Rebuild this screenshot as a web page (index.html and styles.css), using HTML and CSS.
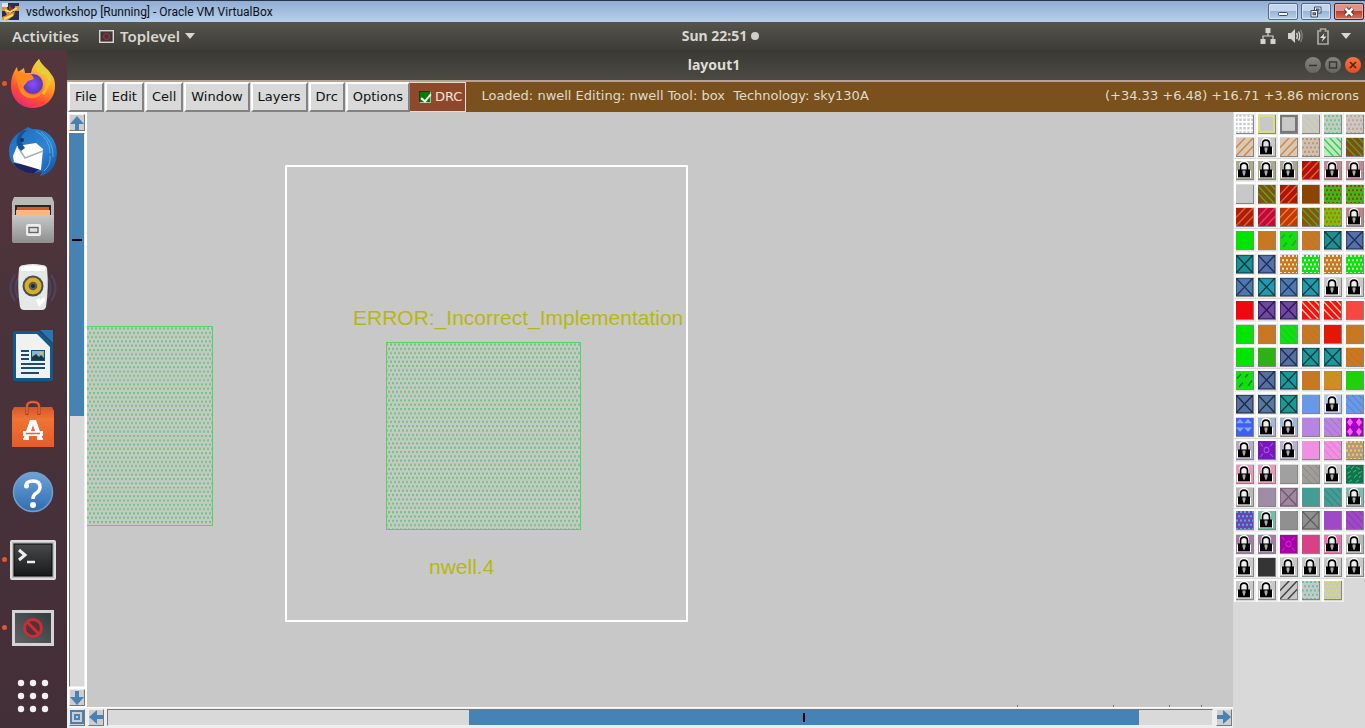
FILE: index.html
```html
<!DOCTYPE html>
<html lang="en">
<head>
<meta charset="utf-8">
<title>vsdworkshop [Running] - Oracle VM VirtualBox</title>
<link rel="stylesheet" href="styles.css">
</head>
<body>
<header class="host-bar">
  <svg class="host-icon" width="17" height="17" viewBox="0 0 17 17"><rect width="17" height="17" fill="#26304e"/><path d="M0 4H5L6 10L12 9L13 3H17V8H13L12 12L6 17H0V14L5 12L3 8H0z" fill="#e8902c"/><path d="M3 7L8 9L15 5M2 16L11 12" stroke="#fbe06a" stroke-width="2" fill="none"/><path d="M7 2L11 6L7 8z" fill="#b8352b"/><rect width="6" height="4" fill="#dfe3ea"/></svg>
  <h1 class="host-title">vsdworkshop [Running] - Oracle VM VirtualBox</h1>
  <div class="host-controls">
    <button class="host-btn" aria-label="Minimize"><svg width="12" height="12" viewBox="0 0 12 12"><rect x="1.500" y="6.500" width="9" height="3" rx="1" fill="#fff" stroke="#3d4c66"/></svg></button>
    <button class="host-btn" aria-label="Restore"><svg width="12" height="12" viewBox="0 0 12 12" stroke="#3d4c66"><path d="M4.500 1H11V7H4.500z" fill="#fff"/><rect x="6.500" y="3" width="2.500" height="2" fill="#8fabcf"/><path d="M1 4.500H7.500V11H1z" fill="#fff"/><rect x="3" y="6.800" width="2.500" height="2" fill="#8fabcf"/></svg></button>
    <button class="host-btn host-close" aria-label="Close"><svg width="12" height="12" viewBox="0 0 12 12"><path d="M2.500 2.500L9.500 9.500M9.500 2.500L2.500 9.500" stroke="#5b2626" stroke-width="4.400"/><path d="M2.500 2.500L9.500 9.500M9.500 2.500L2.500 9.500" stroke="#fff" stroke-width="2.500"/></svg></button>
  </div>
</header>

<div class="shell">
  <div class="top-bar">
    <div class="top-left">
      <button class="top-item">Activities</button>
      <button class="top-item top-app"><svg width="15" height="13" viewBox="0 0 15 13"><rect x=".7" y=".7" width="13.600" height="11.600" fill="#45333a" stroke="#d8d8d4" stroke-width="1.400"/><circle cx="7.500" cy="6.500" r="3" fill="#5c2a35" stroke="#94404c"/></svg>Toplevel<svg width="10" height="6" viewBox="0 0 10 6"><path d="M0 0H10L5 6z" fill="#d8d8d0"/></svg></button>
    </div>
    <button class="top-item top-clock">Sun 22:51<span class="dot"></span></button>
    <div class="top-right">
      <svg width="16" height="16" viewBox="0 0 16 16" fill="#d4d4cc"><path d="M5.500 0H10.500V5H5.500zM.5 11H5.500V16H.5zM10.500 11H15.500V16H10.500z"/><path d="M8 5V8M3 11V8H13V11" fill="none" stroke="#d4d4cc" stroke-width="1.200"/></svg>
      <svg width="16" height="16" viewBox="0 0 16 16"><path d="M1 5H4L8 1V15L4 11H1z" fill="#d4d4cc"/><path d="M9.500 5Q11.500 8 9.500 11M11.500 3.500Q14 8 11.500 12.500" fill="none" stroke="#d4d4cc" stroke-width="1.400"/><path d="M13.500 2Q17 8 13.500 14" fill="none" stroke="#86867f" stroke-width="1.200"/></svg>
      <svg class="battery" width="14" height="17" viewBox="0 0 14 17"><path d="M4.500 1H9.500V3H12V16H2V3H4.500z" fill="none" stroke="#a9a9a2" stroke-width="1.700"/><path d="M8.500 5L4 10H7L5.500 14L10.500 8.500H7.500z" fill="#e4e4de"/></svg>
      <svg width="10" height="6" viewBox="0 0 10 6"><path d="M0 0H10L5 6z" fill="#d8d8d0"/></svg>
    </div>
  </div>

  <nav class="dock" aria-label="Dock">
    <button class="launcher running" aria-label="Firefox"><svg width="50" height="52" viewBox="0 0 50 52">
      <defs><linearGradient id="ff" x1=".8" y1="0" x2=".3" y2="1"><stop offset="0" stop-color="#ffe24a"/><stop offset=".45" stop-color="#ff9a25"/><stop offset=".75" stop-color="#ff4a36"/><stop offset="1" stop-color="#e82a75"/></linearGradient><radialGradient id="fp"><stop offset="0" stop-color="#8a4dfb"/><stop offset="1" stop-color="#553ab8"/></radialGradient></defs>
      <path d="M31 1C33 8 40 10 43 16C46 19 47 23 47 28C47 41 37 50 25 50C12 50 3 40 3 28C3 19 6 13 9 9L10 14L16 10L17 15H23C24 9 27 5 31 1z" fill="url(#ff)"/><path d="M31 1C34 9 43 11 43 22L41 28L36 17L29 13C28 8 30 4 31 1z" fill="#e3cf3c"/><circle cx="25" cy="26" r="10" fill="url(#fp)"/><path d="M9 13L16 15L24 17L26 21L20 23L15 29C17 38 29 39 35 33C32 42 17 43 12 33C8 23 8 17 9 13z" fill="#ff8a24"/><path d="M36 17Q43 26 35 36" stroke="#ffb52c" stroke-width="3" fill="none"/></svg></button>
    <button class="launcher" aria-label="Thunderbird"><svg width="50" height="50" viewBox="0 0 50 50"><defs><linearGradient id="tb" x1="0" y1="0" x2="1" y2="1"><stop offset="0" stop-color="#1e6ab8"/><stop offset=".6" stop-color="#2d86d4"/><stop offset="1" stop-color="#164a96"/></linearGradient></defs><path d="M14 4L20 0L24 2C40 1 49 13 49 26C49 39 41 48 32 49L34 44L24 47C10 44 1 37 1 24C1 15 6 8 14 4z" fill="url(#tb)"/><path d="M5 36Q10 45 25 47L34 40z" fill="#20235e"/><path d="M9 19L28 16L35 22L33 43L6 35L5 29z" fill="#fff"/><path d="M10 20L17 31L35 24" stroke="#a9b1b8" stroke-width="1.500" fill="none"/><path d="M20 3C11 8 12 15 17 21L13 24C6 17 8 9 14 4z" fill="#155294"/><circle cx="14" cy="13" r="2" fill="#12355f"/><path d="M28 4Q42 12 42 26M33 5Q46 15 45 30M42 29Q43 38 36 44" stroke="#59a9e6" fill="none"/></svg></button>
    <button class="launcher" aria-label="Files"><svg width="44" height="48" viewBox="0 0 44 48"><defs><linearGradient id="fi" x1="0" y1="0" x2="0" y2="1"><stop offset="0" stop-color="#c8c8c8"/><stop offset="1" stop-color="#8e8e8e"/></linearGradient></defs><path d="M3 1H41L43 6V45L41 47H3L1 45V6z" fill="#b9b9b7"/><path d="M4 9H40V19H4z" fill="#2e2421"/><path d="M6 11H38V20H6z" fill="#d75a24"/><path d="M5 14H39V20H5z" fill="#f9b582"/><path d="M1 19H43V45Q43 47 41 47H3Q1 47 1 45z" fill="url(#fi)"/><rect x="15" y="28" width="15" height="12" rx="2" fill="#ededed"/><rect x="18" y="31.500" width="9" height="5" fill="#ddd" stroke="#666" stroke-width="1.400"/></svg></button>
    <button class="launcher" aria-label="Rhythmbox"><svg width="50" height="50" viewBox="0 0 50 50"><path d="M7 12Q-2 25 7 38M43 12Q52 25 43 38M10 15Q5 25 10 35M40 15Q45 25 40 35" stroke="#4b4563" stroke-width="2" fill="none"/><path d="M11 5Q12 2 16 2Q25 0 34 2Q38 2 39 5Q41 24 38 44Q37 47 34 47H16Q13 47 12 44Q9 25 11 5z" fill="#e4e9e8"/><path d="M13 4Q25 1 37 4V8H13z" fill="#fff"/><circle cx="25" cy="23" r="10.500" fill="#4b4e4c"/><circle cx="25" cy="23" r="8.500" fill="#d6ae29"/><circle cx="25" cy="23" r="4.300" fill="#565e60"/><circle cx="25" cy="23" r="2" fill="#202a33"/><path d="M28 37L31 35L32 37L36 34L37 38L31 44z" fill="#fff"/></svg></button>
    <button class="launcher" aria-label="Writer"><svg width="42" height="52" viewBox="0 0 42 52"><path d="M3 1H27L41 14V49Q41 51 39 51H3Q1 51 1 49V3Q1 1 3 1z" fill="#0e5b8f"/><path d="M28 0H41V13z" fill="#2676b4"/><path d="M4 4H25L38 17V48H4z" fill="#f0f2f1"/><path d="M9 21H17M9 25H17M9 29H17M9 34H33M9 38H33M9 43H27" stroke="#174f74" stroke-width="2"/><path d="M19 20H33V31H19z" fill="#164f73"/><path d="M20 21H32V29H20z" fill="#80b8d4"/><path d="M20 30V27L24 24L27 27L29 25L32 28V30z" fill="#1f3540"/><circle cx="29" cy="23" r="1.500" fill="#f0bd43"/></svg></button>
    <button class="launcher" aria-label="Ubuntu Software"><svg width="44" height="48" viewBox="0 0 44 48"><defs><linearGradient id="us" x1="0" y1="0" x2="0" y2="1"><stop offset="0" stop-color="#d5562a"/><stop offset=".3" stop-color="#ef7435"/><stop offset="1" stop-color="#e65b29"/></linearGradient></defs><path d="M3 7H41L43 11V47H1V11z" fill="url(#us)"/><path d="M16 15V6Q16 2 22 2T28 6V15" fill="none" stroke="#a53b22" stroke-width="3"/><path d="M16 14V6Q16 2 22 2T28 6V14" fill="none" stroke="#e36d40" stroke-width="1.500"/><path d="M19 20H25L32 40H27L22 25L17 40H12z" fill="#fff"/><path d="M12 31H32V36H12z" fill="#fff"/><path d="M15 33.500H29" stroke="#e7632d" stroke-width="1.500"/><path d="M12 38H18V40H12zM26 38H32V40H26z" fill="#fff"/></svg></button>
    <button class="launcher" aria-label="Help"><svg width="42" height="42" viewBox="0 0 42 42"><defs><linearGradient id="he" x1="0" y1="0" x2="0" y2="1"><stop offset="0" stop-color="#6fa2d9"/><stop offset="1" stop-color="#2f6cb0"/></linearGradient></defs><circle cx="21" cy="21" r="19.500" fill="url(#he)" stroke="#719fc9" stroke-width="1.500"/><path d="M14 15Q14 10 21 10T28 16Q28 20 23 23Q21 25 21 28" fill="none" stroke="#fff" stroke-width="3.500"/><circle cx="14.500" cy="15" r="2.500" fill="#fff"/><circle cx="21" cy="34" r="3" fill="#fff"/></svg></button>
    <button class="launcher running" aria-label="Terminal"><svg width="46" height="40" viewBox="0 0 46 40"><defs><linearGradient id="te" x1="0" y1="0" x2="0" y2="1"><stop offset="0" stop-color="#47494a"/><stop offset="1" stop-color="#181a1a"/></linearGradient></defs><rect x="1" y="1" width="44" height="38" rx="1" fill="#b9b9b9" stroke="#dedede" stroke-width="2"/><rect x="4" y="4" width="38" height="32" fill="url(#te)" stroke="#080808"/><path d="M9 10L15 15L9 20" fill="none" stroke="#eee" stroke-width="3"/><path d="M17 22H25" stroke="#eee" stroke-width="2.500"/></svg></button>
    <button class="launcher running" aria-label="Toplevel"><svg width="42" height="36" viewBox="0 0 42 36"><defs><linearGradient id="to" x1="1" y1="0" x2="0" y2="1"><stop offset="0" stop-color="#333a3c"/><stop offset="1" stop-color="#626365"/></linearGradient></defs><rect x="1.500" y="1.500" width="39" height="33" fill="url(#to)" stroke="#d4d4d4" stroke-width="3"/><circle cx="21" cy="18" r="8.500" fill="#5b3035" stroke="#c52f36" stroke-width="3"/><path d="M15 12L27 24" stroke="#c52f36" stroke-width="3"/></svg></button>
    <button class="launcher" aria-label="Show Applications"><svg width="32" height="34" viewBox="0 0 32 34" fill="#f4f0f2"><circle cx="4" cy="4" r="3.200"/><circle cx="16" cy="4" r="3.200"/><circle cx="28" cy="4" r="3.200"/><circle cx="4" cy="17" r="3.200"/><circle cx="16" cy="17" r="3.200"/><circle cx="28" cy="17" r="3.200"/><circle cx="4" cy="30" r="3.200"/><circle cx="16" cy="30" r="3.200"/><circle cx="28" cy="30" r="3.200"/></svg></button>
  </nav>

  <main class="window">
    <div class="window-title">
      <h2 class="window-name">layout1</h2>
      <div class="window-controls">
        <button class="round" aria-label="Minimize"><svg width="16" height="16" viewBox="0 0 16 16"><path d="M4 8.500H12" stroke="#373632" stroke-width="1.500"/></svg></button>
        <button class="round" aria-label="Maximize"><svg width="16" height="16" viewBox="0 0 16 16"><rect x="4.500" y="5" width="7" height="6" fill="none" stroke="#373632" stroke-width="1.400"/></svg></button>
        <button class="round round-close" aria-label="Close"><svg width="16" height="16" viewBox="0 0 16 16"><path d="M5 5L11 11M11 5L5 11" stroke="#552313" stroke-width="1.600"/></svg></button>
      </div>
    </div>
    <div class="menu-bar">
      <div class="menus">
        <button class="menu">File</button><button class="menu">Edit</button><button class="menu">Cell</button><button class="menu">Window</button><button class="menu">Layers</button><button class="menu">Drc</button><button class="menu">Options</button>
      </div>
      <label class="drc"><input class="drc-box" type="checkbox" checked>DRC</label>
      <p class="status">Loaded: nwell Editing: nwell Tool: box&nbsp; Technology: sky130A</p>
      <p class="coords">(+34.33 +6.48) +16.71 +3.86 microns</p>
    </div>
    <div class="work">
      <div class="v-scroll">
        <button class="arrow" aria-label="Scroll up"><svg width="14" height="14" viewBox="0 0 14 14"><path d="M7 0L14 8H9V14H5V8H0z" fill="#4682b4"/></svg></button>
        <div class="track v-track"><div class="thumb v-thumb"></div></div>
        <button class="arrow" aria-label="Scroll down"><svg width="14" height="14" viewBox="0 0 14 14"><path d="M7 14L14 6H9V0H5V6H0z" fill="#4682b4"/></svg></button>
      </div>
      <div class="canvas">
        <svg class="well well-left" width="126" height="200"><defs><pattern id="stipple" width="4" height="8.600" patternUnits="userSpaceOnUse"><path d="M0 1.500H2V3.500H0zM2 5.800H4V7.800H2z" fill="#68cb76"/></pattern></defs><rect x="-2" y=".5" width="127.500" height="199" fill="url(#stipple)" stroke="#58d169"/></svg>
        <svg class="well well-main" width="195" height="188"><rect x=".5" y=".5" width="194" height="187" fill="url(#stipple)" stroke="#58d169"/></svg>
        <div class="cursor-box"></div>
        <span class="label label-error">ERROR:_Incorrect_Implementation</span>
        <span class="label label-rule">nwell.4</span>
        <svg class="ticks" width="186" height="2"><path d="M.5 0V2M96.500 0V2M152.500 0V2M184.500 0V2" stroke="#777"/></svg>
      </div>
      <div class="palette" id="palette"></div>
      <div class="h-scroll">
        <button class="arrow" aria-label="Zoom to fit"><svg width="14" height="14" viewBox="0 0 14 14" fill="none" stroke="#4682b4" stroke-width="2"><rect x="1" y="1" width="12" height="12"/><rect x="5" y="5" width="4" height="4"/></svg></button>
        <button class="arrow" aria-label="Scroll left"><svg width="14" height="14" viewBox="0 0 14 14"><path d="M0 7L8 0V5H14V9H8V14z" fill="#4682b4"/></svg></button>
        <div class="track h-track"><div class="thumb h-thumb"></div></div>
        <button class="arrow" aria-label="Scroll right"><svg width="14" height="14" viewBox="0 0 14 14"><path d="M14 7L6 0V5H0V9H6V14z" fill="#4682b4"/></svg></button>
      </div>
    </div>
  </main>
</div>
<script src="palette.js"></script>
</body>
</html>
```
FILE: styles.css
```css
* { box-sizing: border-box; }
body { margin: 0; height: 100vh; display: flex; flex-direction: column; overflow: hidden; background: #c8c8c8; font-family: "DejaVu Sans", sans-serif; font-size: 13px; }
button { margin: 0; padding: 0; border: 0; background: none; font: inherit; color: inherit; display: flex; align-items: center; justify-content: center; }
svg { display: block; flex: none; }
h1, h2, p { margin: 0; font-weight: normal; }

.host-bar { flex: none; height: 22px; display: flex; align-items: center; gap: 7px; padding-left: 2px; border-top: 1px solid #27364e; background: linear-gradient(#91add2, #b9d0ec); }
.host-title { flex: 1; font: 12px/20px Roboto, sans-serif; color: #0b0f18; }
.host-controls { display: flex; gap: 3px; padding-right: 1px; }
.host-btn { width: 30px; height: 17px; border: 1px solid #52698c; border-radius: 2px; background: linear-gradient(#c4d6ec 45%, #98b4d6 50%, #b8d0ec); box-shadow: inset 0 0 0 1px #d5e3f4; }
.host-close { border-color: #5b1a1f; background: linear-gradient(#dc9488 45%, #bb4130 50%, #d27362); box-shadow: inset 0 0 0 1px #e7a99c; }

.shell { flex: 1; min-height: 0; display: grid; grid-template: 28px 1fr / 67px 1fr; }
.top-bar { grid-column: 1 / 3; display: grid; grid-template-columns: 1fr auto 1fr; align-items: center; padding: 0 14px 0 12px; background: linear-gradient(#55544d, #3d3c37); color: #d8d7cf; font: bold 14px/28px "Noto Sans", sans-serif; }
.top-left { display: flex; gap: 20px; font-size: 15px; font-weight: 600; }
.top-item { gap: 6px; }
.top-app svg:last-child { margin-left: -1px; }
.top-clock { margin-left: 78px; gap: 4px; white-space: nowrap; }
.dot { width: 8px; height: 8px; border-radius: 50%; background: #cfcec7; }
.top-right { display: flex; gap: 11px; justify-content: flex-end; align-items: center; }
.battery { margin-left: 2px; }

.dock { display: flex; flex-direction: column; background: linear-gradient(#53363d, #49323a 50%, #432f38); overflow: hidden; }
.launcher { flex: none; position: relative; height: 68px; padding-right: 2px; }
.running::before { content: ""; position: absolute; left: 2px; top: 31px; width: 5px; height: 5px; border-radius: 50%; background: #e2572b; }

.window { min-width: 0; min-height: 0; display: flex; flex-direction: column; }
.window-title { flex: none; height: 30px; display: grid; grid-template-columns: 1fr auto 1fr; align-items: center; padding-right: 4px; background: linear-gradient(#3a3934, #4b4a44); color: #deddd6; }
.window-name { grid-column: 2; font: bold 14px/28px "Noto Sans", sans-serif; }
.window-controls { display: flex; justify-content: flex-end; gap: 4px; }
.round { width: 16px; height: 16px; border-radius: 50%; background: linear-gradient(#85847d, #66655f); }
.round-close { background: linear-gradient(#f9733d, #e24f1e); }

.menu-bar { flex: none; height: 32px; display: flex; align-items: stretch; border-top: 2px solid #b9a295; background: #7a511c; line-height: 28px; color: #dfdccb; white-space: nowrap; }
.menus { display: flex; gap: 1px; padding-left: 1px; background: #d9d9d9; }
.menu { padding: 0 5px; background: #d9d9d9; color: #111; border: 2px solid; border-color: #fff #828282 #828282 #fff; }
.drc { display: flex; align-items: center; gap: 4px; padding: 0 3px 0 9px; background: #90482b; color: #f3e5d9; border: 1px solid #e7dcd5; border-left: 0; }
.drc-box { appearance: none; margin: 0; width: 12px; height: 12px; border: 1px solid; border-color: #173f12 #a5c39d #a5c39d #173f12; background: #087a0a; position: relative; }
.drc-box:checked::after { content: ""; position: absolute; left: 3px; top: 0; width: 4px; height: 8px; border: solid #fff; border-width: 0 2px 2px 0; transform: rotate(40deg); }
.status { padding-left: 15px; }
.coords { margin-left: auto; padding-right: 6px; }

.work { flex: 1; min-height: 0; display: grid; grid-template: 1fr 21px / 20px 1fr 132px; background: #d9d9d9; }
.v-scroll { display: flex; flex-direction: column; align-items: center; gap: 2px; padding: 2px 2px 1px; background: #fff; }
.arrow { flex: none; width: 16px; height: 17px; border: 1px solid; border-color: #eee #777 #777 #eee; background: #cdcdcd; }
.track { display: flex; background: #d9d9d9; border: 1px solid; border-color: #777 #eee #eee #777; }
.v-track { flex: 1; width: 16px; flex-direction: column; }
.thumb { display: flex; align-items: center; justify-content: center; background: #4682b4; }
.v-thumb { height: 51%; }
.v-thumb::before { content: ""; width: 10px; height: 2px; margin-top: -69px; background: #000; }
.h-scroll { grid-column: 1 / 3; display: flex; align-items: center; gap: 3px; padding: 0 1px 2px 2px; border-top: 1px solid #fff; background: #eee; }
.h-track { flex: 1; height: 17px; }
.h-thumb { width: 60.7%; margin-left: 32.7%; }
.h-thumb::before { content: ""; width: 2px; height: 9px; background: #000; }

.canvas { position: relative; overflow: hidden; background: #c8c8c8; }
.well, .cursor-box, .label, .ticks { position: absolute; }
.well-left { left: 0; top: 214px; }
.well-main { left: 299px; top: 230px; }
.cursor-box { left: 198px; top: 53px; width: 403px; height: 457px; border: 2px solid #fff; }
.label { font: 21px/26px "Liberation Sans", Arial, sans-serif; color: #b7b80f; white-space: nowrap; }
.label-error { left: 266px; top: 193px; }
.label-rule { left: 342px; top: 442px; }
.ticks { left: 930px; bottom: 0; }

.palette { grid-row: 1 / 3; grid-column: 3; height: 490px; padding-left: 1px; display: grid; grid-template: repeat(21, 1fr) / repeat(6, 22px); align-items: start; overflow: hidden; }
.swatch { width: 22px; height: 23px; border: 2px solid; border-color: #fff #ececec #ececec #fff; border-bottom-width: 1px; }
.swatch svg { border: solid #858585; border-width: 0 1px 1px 0; }
```
FILE: palette.js
```js
// Each entry: pattern, fill, ink. One string per palette row.
const rows = [
  "grid c8c8c8 fff|frame c8c8c8 dcdc80|frame c8c8c8 777|down c8c8c8 d2d2a4|dots c8c8c8 5fd27a|dots c8c8c8 d0a080",
  "up d8c8b4 cc8844|lock c8c8c8 dde|up d8c8b4 cc8844|dots d0c0b0 b89878|down c0e8c0 33cc55|down 8b4a10 44a828",
  "lock aaa890 eee|lock aaa890 eee|lock aaa890 eee|up b01408 e06428|lock c08890 eee|lock c08890 eee",
  "solid c8c8c8|down 8b4a10 44b020|up b01408 e06428|solid 8b4500|dots 30c010 b03010|dots 30c010 b03010",
  "up b01c0c e06820|up c00c34 e84060|up c03808 f08020|down 905010 44b020|dots 78c010 b07010|lock b88880 eee",
  "solid 00e400|solid c87820|dash 10e010 389838|faint c87820 a87840|cross 1c9090 0a3c48|cross 5870a8 18305c",
  "cross 1c9090 0a3c48|cross 5870a8 18305c|dots c87820 f0e0c0|dots 10e010 e0ffe0|dots c87820 f0e0c0|dots 10e010 c0e8b0",
  "cross 5078a8 183860|cross 209aac 0a3c48|cross 5078b0 183860|cross 209aac 0a3c48|lock c8c8c8 eee|lock c8c8c8 eee",
  "solid f00810|cross 7048a0 2c1850|cross 7048a0 2c1850|down f81010 ffc0a0|down f81010 ffc0a0|solid f44840",
  "solid 00e400|solid c87820|faint 10e010 30b030|faint c87820 a87830|down f01008 c02c08|solid c87820",
  "solid 00e400|solid 30b018|cross 5870a0 182c54|cross 1c9898 0a3c48|cross 1c9898 0a3c48|faint c87820 e06010",
  "dash 10e010 287828|cross 5870a0 182c54|cross 1c9898 0a3c48|solid c87820|faint d08c20 b8a030|solid 20d008",
  "cross 5870a0 182c44|cross 5878a0 183044|cross 1c9890 0a3c48|solid 6898e8|lock b0c8e8 eee|faint 6898e8 5078c0",
  "tri 4060f0 80a8ff|lock a0b8d8 eee|lock a0b8d8 eee|solid b884e4|faint b884e4 9868b8|gem a000c0 ff60ff",
  "lock b8a8d0 eee|ring 7818b8 a850e8|lock b8b0d0 eee|solid f090e0|faint f090e0 d870c0|dots b89880 e8d050",
  "lock e898b8 eee|lock e898b8 eee|solid a0a0a0|faint a09c98 808080|lock c8c8c8 eee|noise 10744c 40b080",
  "lock b8b8b8 eee|solid a08ca4|cross a088a0 705870|solid 449c94|faint 449c94 247870|lock 80b8b0 eee",
  "dots 7040b8 40b8c8|lock 70c0a8 eee|solid 909090|cross 909090 606060|solid a048c8|faint a048c8 7838a0",
  "lock a878a8 eee|lock a878a8 eee|ring a800a8 d020d0|solid d84088|lock f070b0 eee|lock b8b8b8 eee",
  "lock c8c8c8 eee|solid 343434|lock c8c8c8 eee|lock c8c8c8 eee|lock c8c8c8 eee|lock c8c8c8 eee",
  "lock c8c8c8 eee|lock c8c8c8 eee|up c8c8c8 404040|dots c8c8c8 60c8a0|dots c8c8c8 e0e040"
];

const line = (d, ink, w) => `<path d="${d}" fill="none" stroke="#${ink}" stroke-width="${w}"/>`;
const downLines = "M-2 6L10 18M-2 -1L18 19M5 -1L19 13M12 -1L19 6";

function dots(ink) {
  let d = "";
  for (let r = 0; r < 5; r++) {
    for (let c = 0; c < 5; c++) {
      d += `M${c * 4 + (r % 2 ? 2 : 0)} ${r * 4}h2v2h-2z`;
    }
  }
  return `<path d="${d}" fill="#${ink}"/>`;
}

const draw = {
  solid: () => "",
  grid: ink => line("M0 2.500H17M0 6.500H17M0 10.500H17M0 14.500H17M2.500 0V17M6.500 0V17M10.500 0V17M14.500 0V17", ink, 1.6),
  frame: ink => `<rect x="1" y="1" width="15" height="15" fill="none" stroke="#${ink}" stroke-width="2"/>`,
  up: ink => line("M-1 10L10 -1M-1 18L18 -1M7 18L18 7", ink, 1.4),
  down: ink => line(downLines, ink, 1.4),
  faint: ink => line(downLines, ink, 0.7),
  dash: ink => line("M1 7L5 3M9 6L12 3M3 15L7 11M12 14L16 9", ink, 1.4),
  cross: ink => line("M0 0L17 17M17 0L0 17", ink, 1.3) + `<rect x=".5" y=".5" width="16" height="16" fill="none" stroke="#${ink}" opacity=".6"/>`,
  dots,
  tri: ink => `<path d="M0 5L4 1L8 5L12 1L16 5zM0 9L4 13L8 9L12 13L16 9z" fill="#${ink}"/>`,
  gem: ink => `<path d="M4 0L7 4L4 8L1 4zM13 0L16 4L13 8L10 4zM4 9L7 13L4 17L1 13zM13 9L16 13L13 17L10 13z" fill="#${ink}"/>`,
  ring: ink => `<g fill="none" stroke="#${ink}"><circle cx="8.500" cy="8.500" r="2.500"/><path d="M2 2L5 5M15 2L12 5M2 15L5 12M15 15L12 12"/></g>`,
  noise: ink => line("M1 3L4 1M5 4L8 1M10 2L14 4M1 8L5 6M7 7L10 5M12 8L16 6M2 12L5 10M8 12L11 9M13 12L15 10M3 16L6 14M10 16L13 14", ink, 1),
  lock: ink => `<path d="M1 9H3V5Q3 0 8 0T13 5V9H15V16H1z" fill="#fff"/><path d="M4.500 9V5.500Q4.500 2 8 2T11.500 5.500V9" fill="#${ink}" stroke="#000" stroke-width="1.700"/><path d="M2 8H14V15.500H2z" fill="#000"/><path d="M6.500 9H9.500V11L8.500 14H7.500L6.500 11z" fill="#aaa"/>`
};

const palette = document.getElementById("palette");
palette.innerHTML = rows.map((row, r) => row.split("|").map((cell, c) => {
  const [kind, fill, ink] = cell.split(" ");
  return `<button class="swatch" aria-label="Layer ${r * 6 + c + 1}"><svg width="18" height="19" viewBox="0 0 17 17" preserveAspectRatio="none"><rect width="17" height="17" fill="#${fill}"/>${draw[kind](ink)}</svg></button>`;
}).join("")).join("");
```
